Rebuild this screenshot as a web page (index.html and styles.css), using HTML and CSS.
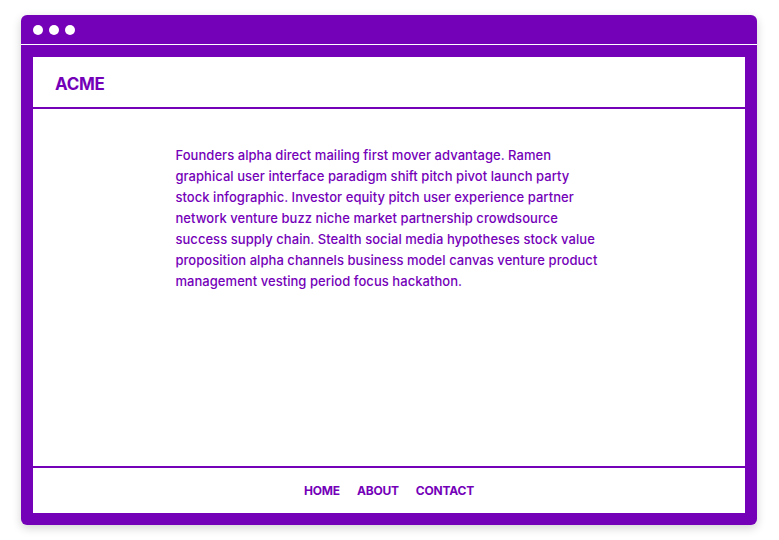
FILE: index.html
```html
<!DOCTYPE html>
<html>
<head>
<meta charset="utf-8">
<link rel="stylesheet" href="styles.css">
</head>
<body>
<div class="window">
  <div class="titlebar">
    <span class="dot"></span><span class="dot"></span><span class="dot"></span>
  </div>
  <div class="page">
    <header class="header"><span class="logo">ACME</span></header>
    <main class="main">
      <p class="copy">Founders alpha direct mailing first mover advantage. Ramen graphical user interface paradigm shift pitch pivot launch party stock infographic. Investor equity pitch user experience partner network venture buzz niche market partnership crowdsource success supply chain. Stealth social media hypotheses stock value proposition alpha channels business model canvas venture product management vesting period focus hackathon.</p>
    </main>
    <footer class="footer">
      <a class="link">HOME</a><a class="link">ABOUT</a><a class="link">CONTACT</a>
    </footer>
  </div>
</div>
</body>
</html>
```
FILE: styles.css
```css
html, body { margin: 0; padding: 0; background: #fff; }
body { padding: 15px 22px 15px 21px; font-family: "Inter", "Liberation Sans", sans-serif; color: #7400b8; }
.window {
  width: 736px; height: 510px; box-sizing: border-box;
  background: #7400b8; border-radius: 6px;
  box-shadow: 0 3px 10px rgba(0,0,0,0.18);
  display: flex; flex-direction: column;
}
.titlebar {
  height: 29px; display: flex; align-items: center; gap: 6px;
  padding-left: 12px; border-bottom: 1px solid #fff; flex: none;
}
.dot { width: 10px; height: 10px; border-radius: 50%; background: #fff; }
.page {
  margin: 12px 12px 12px; background: #fff; flex: 1;
  display: flex; flex-direction: column;
}
.header {
  height: 52px; box-sizing: border-box; padding-top: 3px; border-bottom: 2px solid #7400b8;
  display: flex; align-items: center; padding-left: 22px; flex: none;
}
.logo { font-weight: 700; font-size: 17px; letter-spacing: -0.3px; }
.main { flex: 1; padding-top: 36px; }
.copy {
  margin: 0 auto; width: 60%; font-size: 13px; line-height: 21px; font-weight: 500;
  letter-spacing: 0.05px;
}
.footer {
  height: 45px; border-top: 2px solid #7400b8; display: flex; justify-content: center;
  align-items: center; gap: 17px; flex: none;
}
.link { font-weight: 700; font-size: 12px; letter-spacing: -0.2px; }
```
